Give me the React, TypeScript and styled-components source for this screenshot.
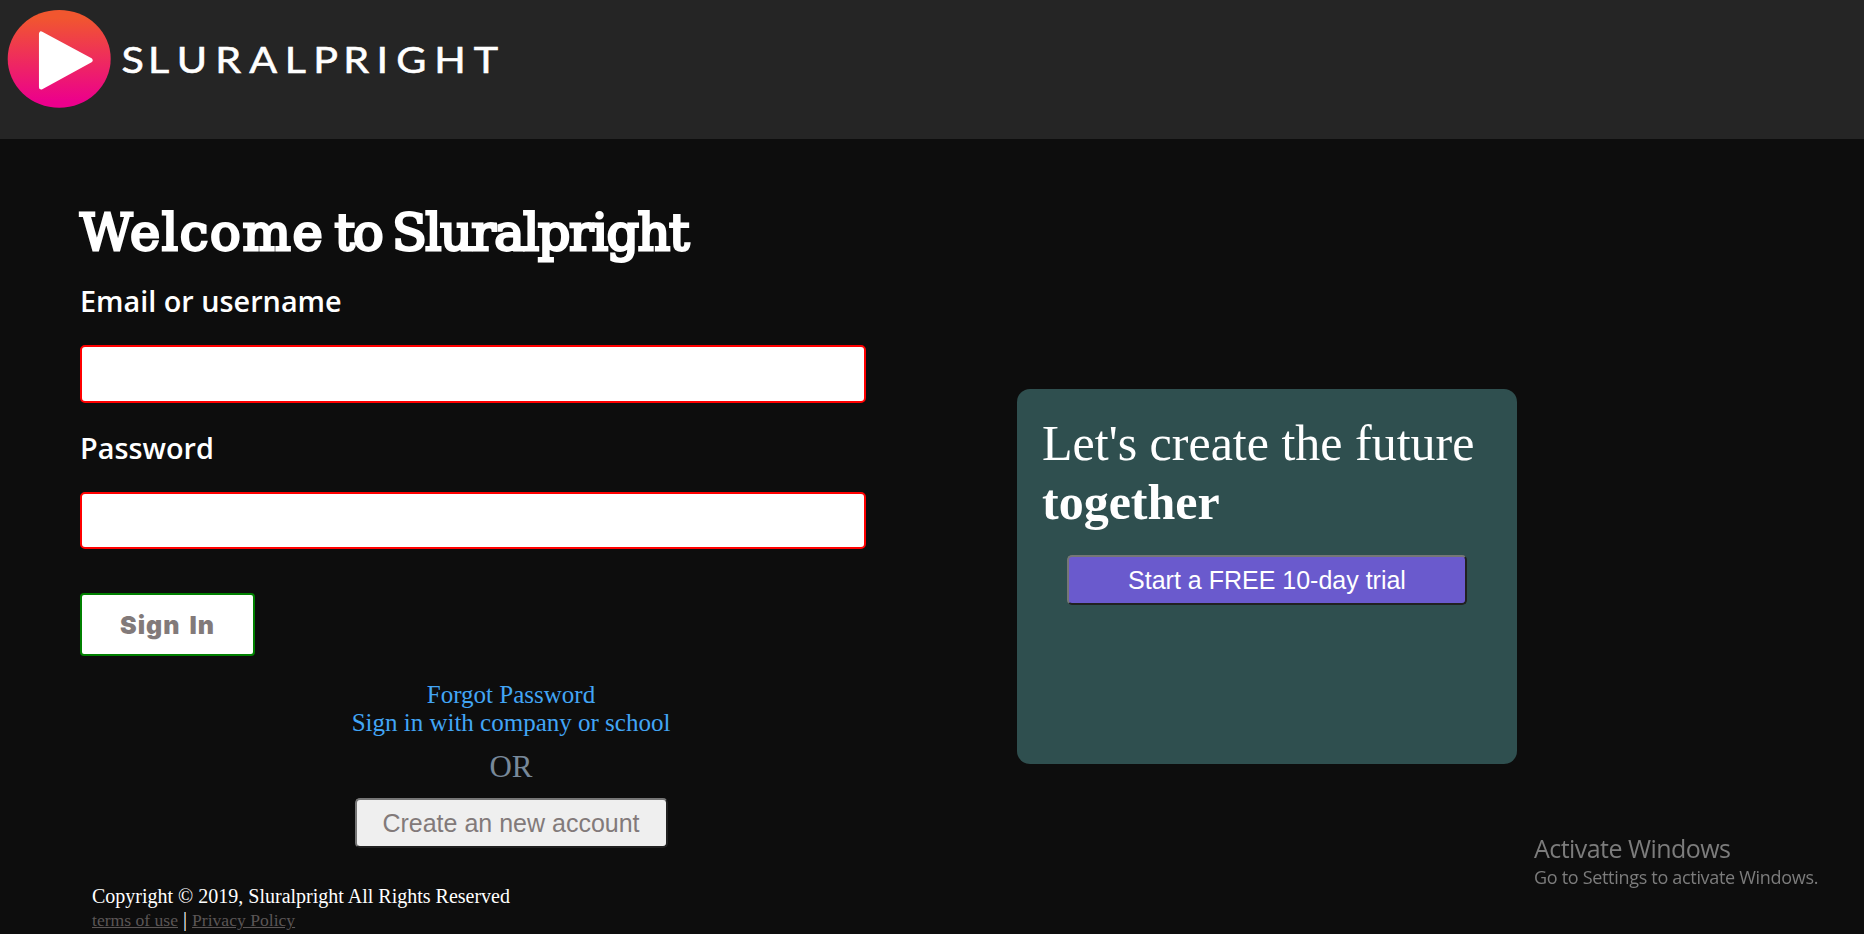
import React from "react";
import styled, { createGlobalStyle } from "styled-components";

const GlobalStyle = createGlobalStyle`
  * { box-sizing: border-box; }
  html, body { margin: 0; height: 100%; background: #0d0d0d; overflow: hidden; }
  body { font-family: "Liberation Serif", "Times New Roman", serif; color: #fff; }
`;

const Header = styled.header`
  height: 139px;
  background: #252525;
`;

const Logo = styled.svg`
  display: block;
  width: 520px;
  height: 139px;
`;

const Main = styled.main`
  display: flex;
  align-items: flex-start;
  gap: 75px;
  padding: 63px 0 0 80px;
`;

const Form = styled.form`
  display: flex;
  flex-direction: column;
  width: 862px;
`;

const Title = styled.h1`
  margin: 0 0 17px;
  font: 400 51px/62px "DejaVu Serif", serif;
  letter-spacing: -0.6px;
  word-spacing: -5.5px;
  -webkit-text-stroke: 2.8px #fff;
  white-space: nowrap;
`;

const TitleWord = styled.span<{ $tracking: number }>`
  letter-spacing: ${(p) => p.$tracking}px;
`;

const Label = styled.label`
  font: 600 28.8px/40px "Open Sans", sans-serif;
`;

const Field = styled.input<{ $height: number; $after: number }>`
  width: 786px;
  height: ${(p) => p.$height}px;
  margin: 24px 0 ${(p) => p.$after}px;
  padding: 0 12px;
  border: 2px solid #f00;
  border-radius: 5px;
  background: #fff;
  font-size: 25px;
  outline: none;
`;

const SignIn = styled.button`
  width: 175px;
  height: 63px;
  padding: 0;
  border: 2px solid #008000;
  border-radius: 4px;
  background: #fff;
  color: #827a7a;
  font: 900 25px "Arial Black", Inter, sans-serif;
  letter-spacing: 1px;
  word-spacing: 3px;
`;

const Alternatives = styled.section`
  display: flex;
  flex-direction: column;
  align-items: center;
  margin-top: 25px;
`;

const Link = styled.a`
  color: #42a5f5;
  font-size: 25px;
  line-height: 28px;
`;

const Divider = styled.p`
  margin: 12px 0 13px;
  color: #778899;
  font-size: 31px;
  line-height: 36px;
`;

const OutsetButton = styled.button<{ $width: number; $bg: string; $fg: string }>`
  width: ${(p) => p.$width}px;
  height: 50px;
  padding: 0;
  border: 2px solid;
  border-color: #767676 #212121 #212121 #767676;
  border-radius: 5px;
  background: ${(p) => p.$bg};
  color: ${(p) => p.$fg};
  font: 25px "Liberation Sans", Arial, sans-serif;
`;

const Promo = styled.aside`
  display: flex;
  flex-direction: column;
  align-items: center;
  width: 500px;
  height: 375px;
  margin-top: 187px;
  padding: 25px;
  border-radius: 13px;
  background: #2f4f4f;
`;

const PromoText = styled.p`
  align-self: stretch;
  margin: 0 0 23px;
  font-size: 50px;
  line-height: 59px;
`;

const Footer = styled.footer`
  margin: 36px 0 0 92px;
  font-size: 20px;
  line-height: 24px;
`;

const Legal = styled.div`
  line-height: 22px;
`;

const LegalLink = styled.a`
  color: #5b5656;
  font-size: 17.6px;
  text-decoration: underline;
`;

const Watermark = styled.div`
  position: fixed;
  left: 1534px;
  top: 832px;
  color: #7c7c7c;
  font-family: "Segoe UI", "Open Sans", sans-serif;
  white-space: nowrap;
`;

const WatermarkTitle = styled.div`
  font-size: 25px;
  line-height: 32px;
  letter-spacing: -0.55px;
`;

const WatermarkNote = styled.div`
  font-size: 18px;
  line-height: 27px;
  letter-spacing: -0.31px;
`;

export default function App() {
  return (
    <>
      <GlobalStyle />
      <Header>
        <Logo viewBox="0 0 520 139" role="img" aria-label="Sluralpright">
          <defs>
            <linearGradient id="disc" x1="0" y1="0" x2="0" y2="1">
              <stop offset="0.08" stopColor="#f1562f" />
              <stop offset="0.94" stopColor="#ec008c" />
            </linearGradient>
          </defs>
          <ellipse cx="59.2" cy="58.8" rx="51.5" ry="48.9" fill="url(#disc)" />
          <path
            d="M41.2 33.7V87.3L90.5 60.3Z"
            fill="#fff"
            stroke="#fff"
            strokeWidth="4.5"
            strokeLinejoin="round"
          />
          <text
            transform="scale(1.1 1)"
            x="110.5 134.6 160.6 195.7 226.5 258.9 284.8 312.1 342.3 360.2 394.8 430.7"
            y="73.5"
            fill="#fff"
            stroke="#fff"
            strokeWidth="0.6"
            fontFamily="Lato, sans-serif"
            fontSize="37.5"
          >
            SLURALPRIGHT
          </text>
        </Logo>
      </Header>
      <Main>
        <Form>
          <Title>
            <TitleWord $tracking={1.7}>Welcome</TitleWord>{" "}
            <TitleWord $tracking={-2}>to</TitleWord>{" "}
            <TitleWord $tracking={-1.55}>Sluralpright</TitleWord>
          </Title>
          <Label htmlFor="user">Email or username</Label>
          <Field id="user" type="text" $height={58} $after={25} />
          <Label htmlFor="pass">Password</Label>
          <Field id="pass" type="password" $height={57} $after={44} />
          <SignIn type="button">Sign In</SignIn>
          <Alternatives>
            <Link>Forgot Password</Link>
            <Link>Sign in with company or school</Link>
            <Divider>OR</Divider>
            <OutsetButton type="button" $width={313} $bg="#efefef" $fg="#827a7a">
              Create an new account
            </OutsetButton>
          </Alternatives>
        </Form>
        <Promo>
          <PromoText>
            Let's create the future <b>together</b>
          </PromoText>
          <OutsetButton type="button" $width={400} $bg="#6a5acd" $fg="#fff">
            Start a FREE 10-day trial
          </OutsetButton>
        </Promo>
      </Main>
      <Footer>
        Copyright © 2019, Sluralpright All Rights Reserved
        <Legal>
          <LegalLink>terms of use</LegalLink> | <LegalLink>Privacy Policy</LegalLink>
        </Legal>
      </Footer>
      <Watermark>
        <WatermarkTitle>Activate Windows</WatermarkTitle>
        <WatermarkNote>Go to Settings to activate Windows.</WatermarkNote>
      </Watermark>
    </>
  );
}
